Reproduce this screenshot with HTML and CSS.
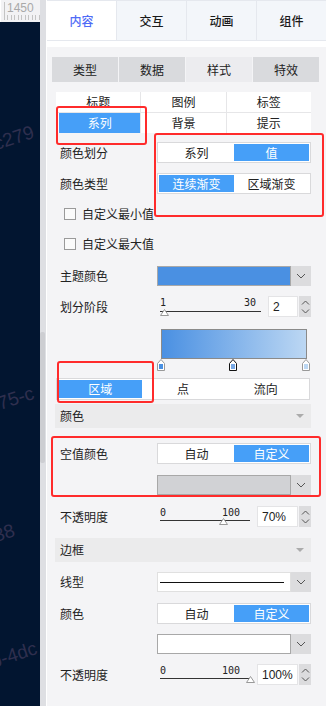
FILE: index.html
```html
<!DOCTYPE html>
<html>
<head>
  <meta charset="utf-8" />
  <title>样式设置</title>
  <link rel="stylesheet" href="styles.css">
</head>
<body>

<div class="app">
  <div class="canvas">
    <div class="ruler"><span>1450</span></div>
    <div class="stage">
      <span class="wm wm1">c279</span>
      <span class="wm wm2">275-c</span>
      <span class="wm wm3">38</span>
      <span class="wm wm4">b-4dc</span>
    </div>
  </div>

  <div class="track"><div class="thumb"></div></div>

  <div class="panel">
    <div class="tabs">
      <div class="tab active">内容</div>
      <div class="tab">交互</div>
      <div class="tab">动画</div>
      <div class="tab">组件</div>
    </div>

    <div class="body">
      <div class="subtabs">
        <div class="subtab">类型</div>
        <div class="subtab">数据</div>
        <div class="subtab active">样式</div>
        <div class="subtab">特效</div>
      </div>

      <div class="form">
        <div class="grid">
          <div class="cell">标题</div>
          <div class="cell">图例</div>
          <div class="cell">标签</div>
          <div class="cell on">系列</div>
          <div class="cell">背景</div>
          <div class="cell">提示</div>
        </div>

        <div class="row mt9">
          <div class="label">颜色划分</div>
          <div class="seg"><span>系列</span><span class="on">值</span></div>
        </div>

        <div class="row">
          <div class="label">颜色类型</div>
          <div class="seg"><span class="on">连续渐变</span><span>区域渐变</span></div>
        </div>

        <div class="check mt8"><i class="box"></i>自定义最小值</div>
        <div class="check"><i class="box"></i>自定义最大值</div>

        <div class="row drop-row mt12">
          <div class="label">主题颜色</div>
          <div class="drop">
            <div class="swatch blue"></div>
            <div class="btn"><svg width="10" height="6" viewBox="0 0 10 6"><path d="M1 1l4 4 4-4" fill="none" stroke="#555" stroke-width="1"/></svg></div>
          </div>
        </div>

        <div class="row">
          <div class="label">划分阶段</div>
          <div class="slider">
            <div class="ticks"><span>1</span><span>30</span></div>
            <div class="bar"></div>
            <svg class="knob" style="left:3.5px" width="9" height="7" viewBox="0 0 9 7"><path d="M0.5 6.5L4.5 0.5 8.5 6.5Z" fill="#fff" stroke="#999"/></svg>
          </div>
          <div class="num short">2</div>
          <div class="spin">
            <svg width="9" height="5" viewBox="0 0 9 5"><path d="M1 4.5l3.5-3.5 3.5 3.5" fill="none" stroke="#555"/></svg>
            <svg width="9" height="5" viewBox="0 0 9 5"><path d="M1 0.5l3.5 3.5 3.5-3.5" fill="none" stroke="#555"/></svg>
          </div>
        </div>

        <div class="ramp">
          <div class="gradient"></div>
          <svg width="154" height="12" viewBox="0 0 154 12">
            <path d="M0.5 11.5V4.5L4 0.5 7.5 4.5V11.5Z" fill="#fff" stroke="#999"/>
            <rect x="2" y="5" width="4" height="5" fill="#4a90e2"/>
            <path d="M72.5 11.5V4.5L76 0.5 79.5 4.5V11.5Z" fill="#fff" stroke="#111"/>
            <rect x="74" y="5" width="4" height="5" fill="#78a9e6"/>
            <path d="M145.5 11.5V4.5L149 0.5 152.5 4.5V11.5Z" fill="#fff" stroke="#999"/>
            <rect x="147" y="5" width="4" height="5" fill="#bcd7f3"/>
          </svg>
        </div>

        <div class="seg wide mt7"><span class="on">区域</span><span>点</span><span>流向</span></div>

        <div class="head mt4"><span>颜色</span><i class="caret"></i></div>

        <div class="row mt15">
          <div class="label">空值颜色</div>
          <div class="seg"><span>自动</span><span class="on">自定义</span></div>
        </div>

        <div class="row drop-row mt11">
          <div class="label"></div>
          <div class="drop">
            <div class="swatch grey"></div>
            <div class="btn"><svg width="10" height="6" viewBox="0 0 10 6"><path d="M1 1l4 4 4-4" fill="none" stroke="#555" stroke-width="1"/></svg></div>
          </div>
        </div>

        <div class="row mt11">
          <div class="label">不透明度</div>
          <div class="slider short">
            <div class="ticks"><span>0</span><span>100</span></div>
            <div class="bar"></div>
            <svg class="knob" style="left:70%" width="9" height="7" viewBox="0 0 9 7"><path d="M0.5 6.5L4.5 0.5 8.5 6.5Z" fill="#fff" stroke="#999"/></svg>
          </div>
          <div class="num">70%</div>
          <div class="spin">
            <svg width="9" height="5" viewBox="0 0 9 5"><path d="M1 4.5l3.5-3.5 3.5 3.5" fill="none" stroke="#555"/></svg>
            <svg width="9" height="5" viewBox="0 0 9 5"><path d="M1 0.5l3.5 3.5 3.5-3.5" fill="none" stroke="#555"/></svg>
          </div>
        </div>

        <div class="head mt11"><span>边框</span><i class="caret"></i></div>

        <div class="row drop-row">
          <div class="label">线型</div>
          <div class="drop">
            <div class="swatch linetype"><i class="stroke"></i></div>
            <div class="btn"><svg width="10" height="6" viewBox="0 0 10 6"><path d="M1 1l4 4 4-4" fill="none" stroke="#555" stroke-width="1"/></svg></div>
          </div>
        </div>

        <div class="row mt11">
          <div class="label">颜色</div>
          <div class="seg"><span>自动</span><span class="on">自定义</span></div>
        </div>

        <div class="row drop-row">
          <div class="label"></div>
          <div class="drop">
            <div class="swatch white"></div>
            <div class="btn"><svg width="10" height="6" viewBox="0 0 10 6"><path d="M1 1l4 4 4-4" fill="none" stroke="#555" stroke-width="1"/></svg></div>
          </div>
        </div>

        <div class="row">
          <div class="label">不透明度</div>
          <div class="slider short">
            <div class="ticks"><span>0</span><span>100</span></div>
            <div class="bar"></div>
            <svg class="knob" style="left:100%" width="9" height="7" viewBox="0 0 9 7"><path d="M0.5 6.5L4.5 0.5 8.5 6.5Z" fill="#fff" stroke="#999"/></svg>
          </div>
          <div class="num">100%</div>
          <div class="spin">
            <svg width="9" height="5" viewBox="0 0 9 5"><path d="M1 4.5l3.5-3.5 3.5 3.5" fill="none" stroke="#555"/></svg>
            <svg width="9" height="5" viewBox="0 0 9 5"><path d="M1 0.5l3.5 3.5 3.5-3.5" fill="none" stroke="#555"/></svg>
          </div>
        </div>
      </div>
    </div>
  </div>

  <!-- red review marks drawn over the panel -->
  <div class="mark mark1"></div>
  <div class="mark mark2"></div>
  <div class="mark mark3"></div>
  <div class="mark mark4"></div>
</div>

</body>
</html>
```

FILE: styles.css
```css
* {
  box-sizing: border-box;
}

body {
  margin: 0;
  background: #f4f4f6;
  color: #222;
  font-family: "Noto Sans CJK SC", "Noto Sans", sans-serif;
  font-size: 12px;
  line-height: 1;
}

.app {
  position: relative;
  display: flex;
  width: 326px;
  height: 706px;
  overflow: hidden;
}

/* left: editor canvas */
.canvas {
  display: flex;
  flex-direction: column;
  width: 40px;
}

.ruler {
  position: relative;
  height: 22px;
  background: #f2f2f4;
  border-left: 1px solid #fff;
}
.ruler span {
  position: absolute;
  left: 6px;
  top: 2px;
  color: #a9a9a9;
  font-family: "Liberation Sans", sans-serif;
  font-size: 12px;
}
.ruler:before {
  content: "";
  position: absolute;
  left: 3px;
  top: 2px;
  width: 1px;
  height: 17px;
  background: #c4c4c4;
}
.ruler:after {
  content: "";
  position: absolute;
  left: 3px;
  right: 0;
  bottom: 2px;
  height: 5px;
  background: repeating-linear-gradient(to right, #c4c4c4 0 1px, transparent 1px 3.5px);
}

.stage {
  position: relative;
  flex: 1;
  background: #021530;
  overflow: hidden;
}

.wm {
  position: absolute;
  color: #2f2f4e;
  font-family: "Liberation Sans", sans-serif;
  font-size: 19px;
  white-space: nowrap;
  transform: rotate(-18deg);
  transform-origin: left bottom;
}
.wm1 { left: -3px; top: 112px; }
.wm2 { left: -9px; top: 375px; }
.wm3 { left: -3px; top: 504px; }
.wm4 { left: -6px; top: 630px; }

/* scrollbar between canvas and panel */
.track {
  width: 6px;
  background: #dedfe3;
}
.thumb {
  width: 5px;
  height: 131px;
  margin-top: 332px;
  border-radius: 2px;
  background: #cdced2;
}

/* right: properties panel */
.panel {
  flex: 1;
  border-left: 1px solid #fff;
  background: #f4f4f6;
}

.tabs {
  display: flex;
  height: 41px;
  border-top: 1px solid #e5e8ee;
  border-bottom: 1px solid #e5e8ee;
  background: #f3f6fa;
}
.tab {
  flex: 1;
  display: flex;
  align-items: center;
  justify-content: center;
  border-left: 1px solid #e5e8ee;
  font-size: 12px;
  font-weight: 500;
  color: #1a1a1a;
}
.tab:first-child {
  border-left: 0;
}
.tab.active {
  background: #fff;
  color: #4f6cf6;
}

.body {
  border-top: 6px solid #fff;
  padding: 10px 7px 0 5px;
}

.subtabs {
  display: flex;
  gap: 1px;
  height: 25px;
}
.subtab {
  flex: 1;
  display: flex;
  align-items: center;
  justify-content: center;
  background: #d9dadd;
}
.subtab.active {
  background: #ececef;
}

.form {
  margin: 10px 8px 0 4px;
}

.grid {
  display: grid;
  grid-template-columns: repeat(3, 1fr);
  gap: 1px;
  background: #e6e6e8;
}
.cell {
  display: flex;
  align-items: center;
  justify-content: center;
  height: 20px;
  background: #fff;
}
.cell.on {
  border-left: 3px solid #fff;
  background: #469ff8;
  color: #fff;
}

.row {
  display: flex;
  align-items: center;
  height: 21px;
  margin-top: 10px;
}
.drop-row {
  height: 20px;
}
.label {
  width: 101px;
  padding-left: 4px;
}

.mt4 { margin-top: 4px; }
.mt7 { margin-top: 7px; }
.mt8 { margin-top: 8px; }
.mt9 { margin-top: 9px; }
.mt11 { margin-top: 11px; }
.mt12 { margin-top: 12px; }
.mt15 { margin-top: 15px; }

/* segmented buttons */
.seg {
  display: flex;
  width: 154px;
  height: 21px;
  padding: 1px;
  border: 1px solid #d9d9db;
  background: #fff;
}
.seg span {
  flex: 1;
  display: flex;
  align-items: center;
  justify-content: center;
}
.seg .on {
  background: #469ff8;
  color: #fff;
}
.seg.wide {
  width: 254px;
  height: 22px;
  padding: 1px 2px;
}

/* checkboxes */
.check {
  display: flex;
  align-items: center;
  height: 20px;
  margin-top: 10px;
  padding-left: 8px;
}
.check .box {
  width: 12px;
  height: 12px;
  margin-right: 6px;
  border: 1px solid #9a9a9a;
  background: #fbfbfb;
}

/* color / line dropdowns */
.drop {
  display: flex;
  width: 154px;
  height: 20px;
  background: #dcdcde;
}
.swatch {
  flex: 1;
  border: 1px solid #a8a8a8;
}
.swatch.blue { background: #4a90e2; }
.swatch.grey { background: #d1d2d5; }
.swatch.white { background: #fff; }
.swatch.linetype {
  display: flex;
  align-items: center;
  padding: 0 6px 0 2px;
  border-color: #e0e0e0;
  background: #fff;
}
.stroke {
  flex: 1;
  height: 1px;
  background: #111;
}
.drop .btn {
  display: flex;
  align-items: center;
  justify-content: center;
  width: 20px;
}

/* sliders with number box */
.slider {
  position: relative;
  width: 101px;
  height: 21px;
  margin-left: 3px;
}
.slider.short {
  width: 90px;
}
.ticks {
  display: flex;
  justify-content: space-between;
  padding: 2px 5px 0 0;
  font-family: "DejaVu Sans Mono", monospace;
  font-size: 10px;
}
.slider.short .ticks {
  padding-right: 10px;
}
.bar {
  position: absolute;
  left: 0;
  right: 0;
  top: 15px;
  height: 1px;
  background: #333;
}
.short .bar {
  top: 14px;
}
.knob {
  position: absolute;
  top: 13px;
  margin-left: -4px;
}
.short .knob {
  top: 12px;
}

.num {
  display: flex;
  align-items: center;
  width: 41px;
  height: 21px;
  margin-left: 7px;
  padding-left: 4px;
  border: 1px solid #e4e4e6;
  background: #fff;
  font-family: "Liberation Sans", sans-serif;
  font-size: 12px;
}
.num.short {
  width: 30px;
}
.spin {
  display: flex;
  flex-direction: column;
  align-items: center;
  justify-content: center;
  gap: 4px;
  width: 12px;
  height: 21px;
  margin-left: 1px;
  background: #dcdcde;
}

/* gradient ramp */
.ramp {
  width: 154px;
  margin: 12px 0 0 101px;
}
.gradient {
  height: 30px;
  margin: 0 4px;
  border: 1px solid #8a8a8a;
  background: linear-gradient(to right, #4a90e2, #bcd7f3);
}
.ramp svg {
  display: block;
}

/* collapsible section header */
.head {
  display: flex;
  align-items: center;
  justify-content: space-between;
  height: 24px;
  margin-left: -1px;
  padding: 0 7px 0 5px;
  background: #ebebec;
}
.caret {
  width: 0;
  height: 0;
  border-left: 4px solid transparent;
  border-right: 4px solid transparent;
  border-top: 4px solid #ababab;
}

/* red review marks */
.mark {
  position: absolute;
  border: 2px solid #ff2b2b;
  border-radius: 3px;
}
.mark1 { left: 56px; top: 106px; width: 91px; height: 39px; }
.mark2 { left: 154px; top: 133px; width: 170px; height: 84px; }
.mark3 { left: 57px; top: 361px; width: 97px; height: 42px; }
.mark4 { left: 51px; top: 436px; width: 270px; height: 61px; }
```
